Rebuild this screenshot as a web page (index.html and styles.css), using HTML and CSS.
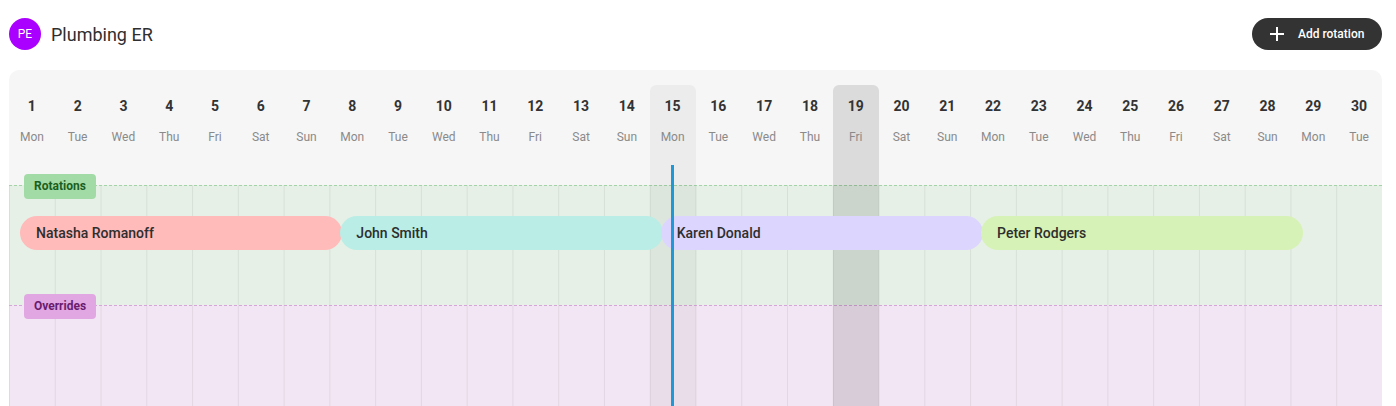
FILE: index.html
```html
<!DOCTYPE html>
<html lang="en">
<head>
  <meta charset="UTF-8">
  <meta name="viewport" content="width=device-width, initial-scale=1.0">
  <title>Plumbing ER</title>
  <link rel="stylesheet" href="styles.css">
</head>
<body>

  <div class="page">
    <div class="topbar">
      <div class="team">
        <div class="avatar">PE</div>
        <div class="team-name">Plumbing ER</div>
      </div>
      <button class="add-btn">
        <svg width="14" height="14" viewBox="0 0 14 14"><path d="M7 0v14M0 7h14" stroke="#fff" stroke-width="2"/></svg>
        Add rotation
      </button>
    </div>

    <div class="calendar">
      <div class="section rotations">
        <span class="badge">Rotations</span>
      </div>
      <div class="section overrides">
        <span class="badge">Overrides</span>
      </div>

      <div class="col-hl today"></div>
      <div class="col-hl selected"></div>

      <div class="days">
        <div class="day"><b>1</b><span>Mon</span></div>
        <div class="day"><b>2</b><span>Tue</span></div>
        <div class="day"><b>3</b><span>Wed</span></div>
        <div class="day"><b>4</b><span>Thu</span></div>
        <div class="day"><b>5</b><span>Fri</span></div>
        <div class="day"><b>6</b><span>Sat</span></div>
        <div class="day"><b>7</b><span>Sun</span></div>
        <div class="day"><b>8</b><span>Mon</span></div>
        <div class="day"><b>9</b><span>Tue</span></div>
        <div class="day"><b>10</b><span>Wed</span></div>
        <div class="day"><b>11</b><span>Thu</span></div>
        <div class="day"><b>12</b><span>Fri</span></div>
        <div class="day"><b>13</b><span>Sat</span></div>
        <div class="day"><b>14</b><span>Sun</span></div>
        <div class="day"><b>15</b><span>Mon</span></div>
        <div class="day"><b>16</b><span>Tue</span></div>
        <div class="day"><b>17</b><span>Wed</span></div>
        <div class="day"><b>18</b><span>Thu</span></div>
        <div class="day"><b>19</b><span>Fri</span></div>
        <div class="day"><b>20</b><span>Sat</span></div>
        <div class="day"><b>21</b><span>Sun</span></div>
        <div class="day"><b>22</b><span>Mon</span></div>
        <div class="day"><b>23</b><span>Tue</span></div>
        <div class="day"><b>24</b><span>Wed</span></div>
        <div class="day"><b>25</b><span>Thu</span></div>
        <div class="day"><b>26</b><span>Fri</span></div>
        <div class="day"><b>27</b><span>Sat</span></div>
        <div class="day"><b>28</b><span>Sun</span></div>
        <div class="day"><b>29</b><span>Mon</span></div>
        <div class="day"><b>30</b><span>Tue</span></div>
      </div>

      <div class="shift week1 red">Natasha Romanoff</div>
      <div class="shift week2 teal">John Smith</div>
      <div class="shift week3 violet">Karen Donald</div>
      <div class="shift week4 lime">Peter Rodgers</div>

      <div class="now-line"></div>
    </div>
  </div>

</body>
</html>
```

FILE: styles.css
```css
body {
  margin: 0;
  background: #ffffff;
  font-family: Roboto, 'Liberation Sans', sans-serif;
  color: #333333;
}
.page {
  padding: 18px 14px 0 9px;
}
.topbar {
  display: flex;
  align-items: center;
  justify-content: space-between;
  height: 32px;
  margin-bottom: 20px;
}
.team { display: flex; align-items: center; gap: 10px; }
.avatar {
  width: 32px;
  height: 32px;
  border-radius: 50%;
  background: #aa00ff;
  color: #fff;
  font-size: 12px;
  display: flex;
  align-items: center;
  justify-content: center;
}
.team-name { font-size: 18px; color: #2f2f2f; }
.add-btn {
  display: flex;
  align-items: center;
  gap: 14px;
  height: 32px;
  width: 130px;
  padding: 0 0 0 18px;
  border: none;
  border-radius: 16px;
  background: #333333;
  color: #ffffff;
  font-family: inherit;
  font-size: 12px;
  font-weight: 500;
}

.calendar {
  display: grid;
  grid-template-columns: repeat(30, minmax(0, 1fr));
  grid-template-rows: 100px 120px 101px;
  padding-top: 15px;
  background: #f6f6f6;
  border-radius: 10px 10px 0 0;
}
.days {
  grid-column: 1 / -1;
  grid-row: 1;
  display: grid;
  grid-template-columns: repeat(30, minmax(0, 1fr));
}
.day {
  display: flex;
  flex-direction: column;
  align-items: center;
  padding-top: 13px;
}
.day b { font-size: 14px; line-height: 16px; font-weight: 700; color: #333; }
.day span { font-size: 12px; line-height: 14px; margin-top: 16px; color: #8a8a8a; }

.section {
  grid-column: 1 / -1;
  background-image: linear-gradient(to right, rgba(0,0,0,0.065) 0 1px, transparent 1px);
  background-size: calc(100% / 30) 100%;
}
.rotations { grid-row: 2; background-color: #e6f0e6; border-top: 1px dashed #a5d3a8; }
.overrides { grid-row: 3; background-color: #f3e6f4; border-top: 1px dashed #d5a6d8; }
.badge {
  display: block;
  width: 72px;
  height: 25px;
  margin: -12px 0 0 15px;
  border-radius: 4px;
  font-size: 12px;
  font-weight: 700;
  line-height: 25px;
  text-align: center;
}
.rotations .badge { background: #a3dba6; color: #1b5e20; }
.overrides .badge { background: #e0a7e2; color: #6a1b6e; }

.col-hl { grid-row: 1 / -1; border-radius: 6px 6px 0 0; }
.col-hl.today { grid-column: 15; background: rgba(0,0,0,0.04); }
.col-hl.selected { grid-column: 19; background: rgba(0,0,0,0.11); }

.shift {
  grid-row: 2;
  align-self: start;
  height: 34px;
  margin: 31px -13px 0 11px;
  padding-left: 16px;
  border-radius: 17px;
  display: flex;
  align-items: center;
  font-size: 14px;
  font-weight: 500;
  color: #2e2e2e;
  white-space: nowrap;
}
.week1 { grid-column: 1 / 8; }
.week2 { grid-column: 8 / 15; }
.week3 { grid-column: 15 / 22; }
.week4 { grid-column: 22 / 29; }
.red { background: #ffbaba; }
.teal { background: #b9ede5; }
.violet { background: #dcd5fd; }
.lime { background: #d7f2b6; }

.now-line {
  grid-column: 15;
  grid-row: 1 / -1;
  justify-self: start;
  width: 3px;
  margin: 80px 0 0 21px;
  background: #1e98d7;
}
```
